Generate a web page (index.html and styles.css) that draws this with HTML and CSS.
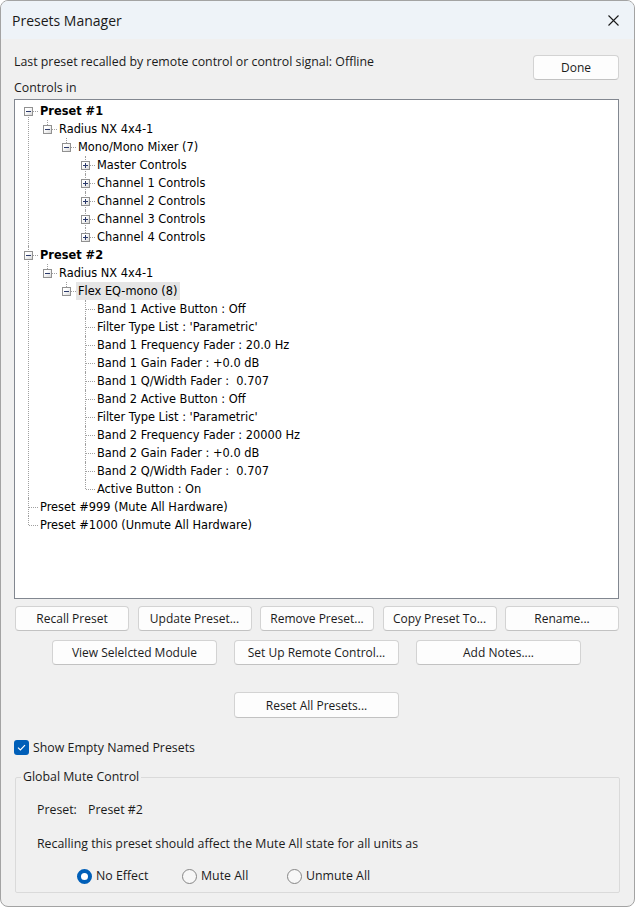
FILE: index.html
```html
<!DOCTYPE html>
<html lang="en">
<head>
    <meta charset="UTF-8">
    <title>Presets Manager</title>
    <link rel="stylesheet" href="styles.css">
</head>
<body>
    <div class="window">
        <div class="titlebar">
            <span class="title">Presets Manager</span>
            <svg class="close" width="11" height="11" viewBox="0 0 11 11">
                <path d="M0.5 0.5 L10.5 10.5 M10.5 0.5 L0.5 10.5" stroke="#1a1a1a" stroke-width="1.1" fill="none"/>
            </svg>
        </div>

        <div class="content">
            <div class="top">
                <div class="labels">
                    <span>Last preset recalled by remote control or control signal: Offline</span>
                    <span>Controls in</span>
                </div>
                <button class="btn done">Done</button>
            </div>

            <div class="tree">
                <ul class="root">
                    <li>
                        <div class="node"><span class="box"></span><b>Preset #1</b></div>
                        <ul>
                            <li>
                                <div class="node"><span class="box"></span>Radius NX 4x4-1</div>
                                <ul>
                                    <li>
                                        <div class="node"><span class="box"></span>Mono/Mono Mixer (7)</div>
                                        <ul>
                                            <li><div class="node"><span class="box plus"></span>Master Controls</div></li>
                                            <li><div class="node"><span class="box plus"></span>Channel 1 Controls</div></li>
                                            <li><div class="node"><span class="box plus"></span>Channel 2 Controls</div></li>
                                            <li><div class="node"><span class="box plus"></span>Channel 3 Controls</div></li>
                                            <li><div class="node"><span class="box plus"></span>Channel 4 Controls</div></li>
                                        </ul>
                                    </li>
                                </ul>
                            </li>
                        </ul>
                    </li>
                    <li>
                        <div class="node"><span class="box"></span><b>Preset #2</b></div>
                        <ul>
                            <li>
                                <div class="node"><span class="box"></span>Radius NX 4x4-1</div>
                                <ul>
                                    <li>
                                        <div class="node"><span class="box"></span><span class="sel">Flex EQ-mono (8)</span></div>
                                        <ul>
                                            <li><div class="node">Band 1 Active Button : Off</div></li>
                                            <li><div class="node">Filter Type List : 'Parametric'</div></li>
                                            <li><div class="node">Band 1 Frequency Fader : 20.0 Hz</div></li>
                                            <li><div class="node">Band 1 Gain Fader : +0.0 dB</div></li>
                                            <li><div class="node">Band 1 Q/Width Fader :  0.707</div></li>
                                            <li><div class="node">Band 2 Active Button : Off</div></li>
                                            <li><div class="node">Filter Type List : 'Parametric'</div></li>
                                            <li><div class="node">Band 2 Frequency Fader : 20000 Hz</div></li>
                                            <li><div class="node">Band 2 Gain Fader : +0.0 dB</div></li>
                                            <li><div class="node">Band 2 Q/Width Fader :  0.707</div></li>
                                            <li><div class="node">Active Button : On</div></li>
                                        </ul>
                                    </li>
                                </ul>
                            </li>
                        </ul>
                    </li>
                    <li><div class="node">Preset #999 (Mute All Hardware)</div></li>
                    <li><div class="node">Preset #1000 (Unmute All Hardware)</div></li>
                </ul>
            </div>

            <div class="row-main">
                <button class="btn">Recall Preset</button>
                <button class="btn">Update Preset...</button>
                <button class="btn">Remove Preset...</button>
                <button class="btn">Copy Preset To...</button>
                <button class="btn">Rename...</button>
            </div>
            <div class="row-wide">
                <button class="btn">View Selelcted Module</button>
                <button class="btn">Set Up Remote Control...</button>
                <button class="btn">Add Notes....</button>
            </div>
            <div class="row-reset">
                <button class="btn">Reset All Presets...</button>
            </div>

            <label class="check">
                <span class="checkbox">
                    <svg width="15" height="15" viewBox="0 0 15 15">
                        <path d="M4 7.6 L6.4 10 L11 5.2" stroke="#fff" stroke-width="1.2" fill="none"/>
                    </svg>
                </span>
                Show Empty Named Presets
            </label>

            <fieldset class="group">
                <legend>Global Mute Control</legend>
                <div class="preset-line"><span class="key">Preset:</span>Preset #2</div>
                <div class="hint">Recalling this preset should affect the Mute All state for all units as</div>
                <div class="radios">
                    <span class="radio on"><span class="dot"></span>No Effect</span>
                    <span class="radio"><span class="dot"></span>Mute All</span>
                    <span class="radio"><span class="dot"></span>Unmute All</span>
                </div>
            </fieldset>
        </div>
    </div>
</body>
</html>
```

FILE: styles.css
```css
body {
    margin: 0;
    background: #fff;
    font-family: "Open Sans", "Liberation Sans", sans-serif;
    font-size: 12.35px;
    color: #1b1b1b;
}

.window {
    width: 635px;
    height: 907px;
    box-sizing: border-box;
    border: 1px solid #a3a3a3;
    border-radius: 8px;
    background: #f0f0f0;
    overflow: hidden;
}

.titlebar {
    height: 38px;
    background: #eef3f8;
    display: flex;
    align-items: center;
    justify-content: space-between;
    padding: 0 15px 0 11px;
}

.title {
    font-size: 14px;
    color: #1a1a1a;
}

.content {
    padding: 15px 15px 0 13px;
}

.top {
    display: flex;
    justify-content: space-between;
    align-items: flex-start;
}

.labels {
    display: flex;
    flex-direction: column;
    gap: 10px;
    line-height: 16px;
}

/* push buttons */
.btn {
    font-family: inherit;
    font-size: 12px;
    color: #1b1b1b;
    background: #fdfdfd;
    border: 1px solid #d3d3d3;
    border-bottom-color: #c2c2c2;
    border-radius: 4px;
    height: 25px;
    padding: 0;
    box-sizing: border-box;
}

.done {
    width: 86px;
    margin-top: 1px;
}

/* tree view */
.tree {
    margin-top: 3px;
    height: 500px;
    box-sizing: border-box;
    border: 1px solid #828790;
    background: #fff;
    padding-top: 2px;
    font-family: "DejaVu Sans", sans-serif;
    font-size: 11.4px;
    color: #000;
}

.tree ul {
    list-style: none;
    margin: 0;
    padding: 0 0 0 19px;
}

.tree ul.root {
    padding-left: 0;
}

.tree li {
    position: relative;
}

/* vertical connector between siblings */
.tree li::before {
    content: "";
    position: absolute;
    left: 13px;
    top: 0;
    bottom: 0;
    border-left: 1px dotted #a0a0a0;
}

.tree li:last-child::before {
    bottom: auto;
    height: 9px;
}

.tree ul.root > li:first-child::before {
    top: 9px;
}

.node {
    position: relative;
    height: 18px;
    line-height: 18px;
    padding-left: 25px;
    white-space: pre;
}

/* horizontal connector into the item */
.node::before {
    content: "";
    position: absolute;
    left: 14px;
    top: 9px;
    width: 9px;
    border-top: 1px dotted #a0a0a0;
}

.node b {
    font-weight: bold;
}

.box {
    position: absolute;
    z-index: 1;
    left: 9px;
    top: 5px;
    width: 9px;
    height: 9px;
    box-sizing: border-box;
    border: 1px solid #919191;
    background: linear-gradient(135deg, #ffffff 30%, #d9d9d9 100%);
}

.box::after {
    content: "";
    position: absolute;
    left: 1px;
    top: 3px;
    width: 5px;
    height: 1px;
    background: #2b3a6b;
}

.box.plus::before {
    content: "";
    position: absolute;
    left: 3px;
    top: 1px;
    width: 1px;
    height: 5px;
    background: #2b3a6b;
}

.sel {
    display: inline-block;
    height: 18px;
    margin-left: -2px;
    padding: 0 2px;
    background: #e5e5e5;
}

/* button rows */
.row-main {
    margin-top: 7px;
    padding-left: 1px;
    display: flex;
    justify-content: space-between;
}

.row-main .btn {
    width: 114px;
}

.row-wide {
    margin-top: 9px;
    display: flex;
    justify-content: center;
    gap: 17px;
}

.row-wide .btn,
.row-reset .btn {
    width: 165px;
}

.row-reset {
    margin-top: 27px;
    display: flex;
    justify-content: center;
}

.row-reset .btn {
    height: 26px;
}

.check {
    margin-top: 22px;
    display: flex;
    align-items: center;
    gap: 4px;
    height: 15px;
}

.checkbox {
    width: 15px;
    height: 15px;
    border-radius: 3px;
    background: #005fb8;
    display: block;
}

.checkbox svg {
    display: block;
}

/* global mute group */
.group {
    margin: 14px -1px 0 1px;
    padding: 0 0 8px 21px;
    border: 1px solid #dadada;
    border-radius: 2px;
}

.group legend {
    margin-left: -16px;
    padding: 0 2px;
    line-height: 16px;
}

.preset-line {
    margin-top: 17px;
    line-height: 16px;
}

.key {
    display: inline-block;
    width: 51px;
}

.hint {
    margin-top: 18px;
    line-height: 16px;
}

.radios {
    margin-top: 16px;
    padding-left: 40px;
    display: flex;
    line-height: 16px;
}

.radio {
    width: 105px;
    display: flex;
    align-items: center;
    gap: 4px;
}

.dot {
    width: 15px;
    height: 15px;
    box-sizing: border-box;
    border-radius: 50%;
    border: 1px solid #868686;
    background: #f7f7f7;
}

.radio.on .dot {
    border: 4px solid #005fb8;
    background: #fff;
}
```
